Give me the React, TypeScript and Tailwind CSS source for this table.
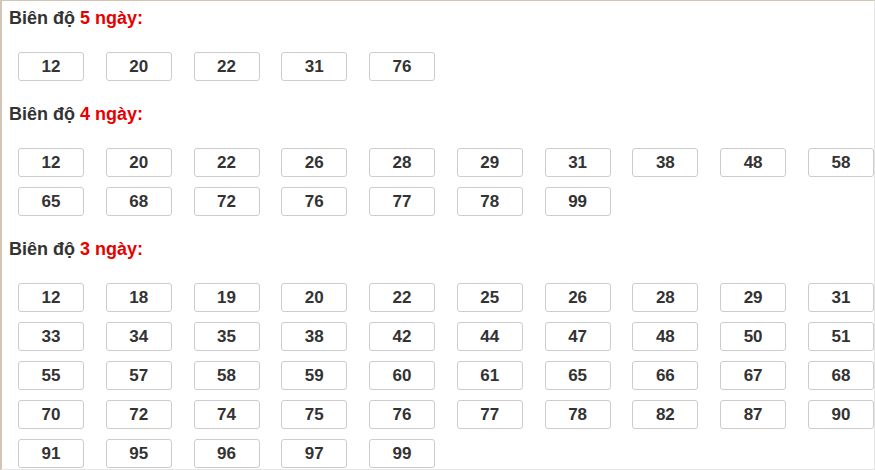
import React from 'react'

// ---------------------------------------------------------------------------
// Data
// ---------------------------------------------------------------------------

const sections = [
  { days: 5, numbers: ['12', '20', '22', '31', '76'] },
  {
    days: 4,
    numbers: ['12', '20', '22', '26', '28', '29', '31', '38', '48', '58', '65', '68', '72', '76', '77', '78', '99'],
  },
  {
    days: 3,
    numbers: [
      '12', '18', '19', '20', '22', '25', '26', '28', '29', '31',
      '33', '34', '35', '38', '42', '44', '47', '48', '50', '51',
      '55', '57', '58', '59', '60', '61', '65', '66', '67', '68',
      '70', '72', '74', '75', '76', '77', '78', '82', '87', '90',
      '91', '95', '96', '97', '99',
    ],
  },
]

// ---------------------------------------------------------------------------
// Component
// ---------------------------------------------------------------------------

export default function App() {
  return (
    <div
      className="w-[875px] h-[470px] overflow-hidden bg-white box-border border-l-2 border-t border-l-[#d3c5b6] border-t-[#d3c5b6] border-r border-b border-r-[#e6e6e6] border-b-[#e6e6e6]"
      style={{ fontFamily: '"Liberation Sans", Arial, sans-serif' }}
    >
      <div className="pl-[16px] pt-[6px]">
        {sections.map((s, i) => (
          <div key={s.days} className={i === 0 ? '' : 'mt-[22px]'}>
            <div className="-ml-[9px] h-[22px] leading-[22px] text-[18px] font-bold text-[#333]">
              Biên độ <span className="text-[#e60000]">{s.days} ngày:</span>
            </div>
            <div className="mt-[23px] grid grid-cols-[repeat(10,66px)] gap-x-[21.78px] gap-y-[10px]">
              {s.numbers.map((n, j) => (
                <div
                  key={j}
                  className="h-[29px] flex items-center justify-center rounded-[3px] border border-[#cccccc] text-[17px] font-bold text-[#333]"
                >
                  {n}
                </div>
              ))}
            </div>
          </div>
        ))}
      </div>
    </div>
  )
}
